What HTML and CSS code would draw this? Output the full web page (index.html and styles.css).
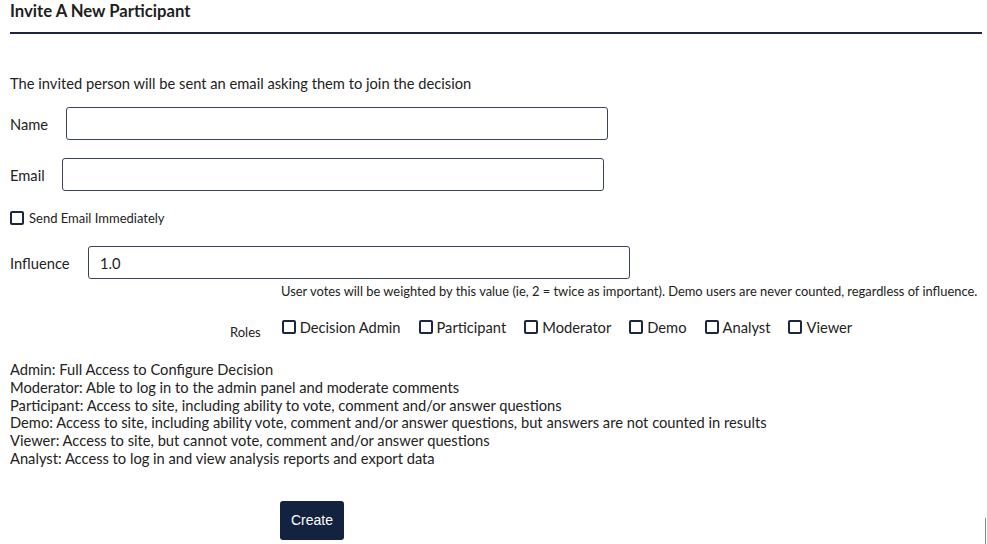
FILE: index.html
```html
<!DOCTYPE html>
<html lang="en">
<head>
  <meta charset="UTF-8" />
  <title>Invite A New Participant</title>
  <link rel="stylesheet" href="styles.css">
</head>
<body>
  <div class="page">
    <h3 class="title">Invite A New Participant</h3>
    <p class="intro">The invited person will be sent an email asking them to join the decision</p>

    <div class="field field-name">
      <label for="name">Name</label>
      <input type="text" id="name" class="text-input">
    </div>

    <div class="field field-email">
      <label for="email">Email</label>
      <input type="text" id="email" class="text-input">
    </div>

    <label class="check send-now"><span class="box"></span>Send Email Immediately</label>

    <div class="field field-influence">
      <label for="influence">Influence</label>
      <input type="text" id="influence" class="text-input" value="1.0">
    </div>
    <p class="help">User votes will be weighted by this value (ie, 2 = twice as important). Demo users are never counted, regardless of influence.</p>

    <div class="roles">
      <span class="roles-label">Roles</span>
      <label class="check role"><span class="box"></span>Decision Admin</label>
      <label class="check role"><span class="box"></span>Participant</label>
      <label class="check role"><span class="box"></span>Moderator</label>
      <label class="check role"><span class="box"></span>Demo</label>
      <label class="check role"><span class="box"></span>Analyst</label>
      <label class="check role"><span class="box"></span>Viewer</label>
    </div>

    <div class="role-notes">
      Admin: Full Access to Configure Decision<br>
      Moderator: Able to log in to the admin panel and moderate comments<br>
      Participant: Access to site, including ability to vote, comment and/or answer questions<br>
      Demo: Access to site, including ability vote, comment and/or answer questions, but answers are not counted in results<br>
      Viewer: Access to site, but cannot vote, comment and/or answer questions<br>
      Analyst: Access to log in and view analysis reports and export data
    </div>

    <div class="actions">
      <button class="btn-create">Create</button>
    </div>
  </div>
  <div class="edge-mark"></div>
</body>
</html>
```

FILE: styles.css
```css
body {
  margin: 0;
  font-family: Lato, "Open Sans", sans-serif;
  color: #222;
  background: #fff;
}
.page {
  padding: 0 5px 0 10px;
}
.title {
  margin: 0;
  padding-top: 2px;
  padding-bottom: 11px;
  font-size: 16.7px;
  font-weight: bold;
  line-height: 19px;
  color: #1e1e1e;
  border-bottom: 2px solid #1b2640;
}
.intro {
  margin: 40px 0 0;
  font-size: 14.7px;
  line-height: 18px;
}
.field {
  display: flex;
  align-items: center;
}
.field label {
  font-size: 14.7px;
  width: 56px;
}
.field-name {
  margin-top: 15px;
}
.field-email {
  margin-top: 18px;
}
.field-email label {
  width: 52px;
}
.field-influence {
  margin-top: 18px;
}
.field-influence label {
  width: 78px;
}
.text-input {
  width: 542px;
  height: 33px;
  box-sizing: border-box;
  border: 1px solid #3a4458;
  border-radius: 3px;
  padding: 0 11px;
  font-family: Lato, sans-serif;
  font-size: 14.7px;
  color: #222;
}
.check {
  display: inline-flex;
  align-items: center;
}
.box {
  width: 10px;
  height: 10px;
  border: 2px solid #1b2640;
  border-radius: 2px;
  margin-right: 5px;
}
.send-now {
  margin-top: 19px;
  font-size: 13px;
}
.help {
  margin: 4px 0 0 271px;
  font-size: 12.9px;
  line-height: 16px;
  white-space: nowrap;
}
.roles {
  display: flex;
  align-items: center;
  margin-top: 15px;
  padding-left: 220px;
}
.roles-label {
  font-size: 13px;
  margin-right: 21px;
  padding-top: 10px;
}
.role {
  font-size: 14.7px;
  margin-right: 18px;
}
.role .box {
  margin-right: 4px;
}
.role-notes {
  margin-top: 21px;
  font-size: 14.7px;
  line-height: 17.8px;
}
.actions {
  margin-top: 33px;
  padding-left: 270px;
}
.btn-create {
  background: #13223f;
  color: #fff;
  border: none;
  border-radius: 3px;
  width: 64px;
  height: 39px;
  font-family: "Liberation Sans", Arial, sans-serif;
  font-size: 14px;
}
.edge-mark {
  position: absolute;
  left: 985px;
  top: 518px;
  width: 1px;
  height: 26px;
  background: #888;
}
```
